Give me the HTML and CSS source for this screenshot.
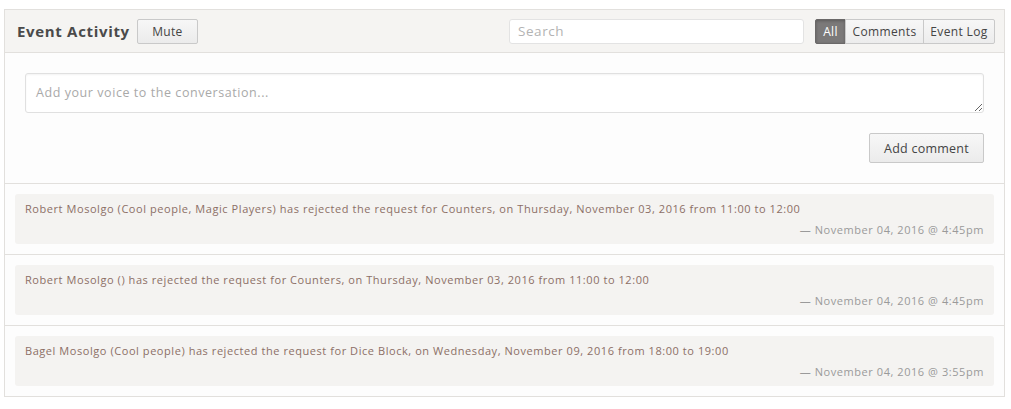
FILE: index.html
```html
<!DOCTYPE html>
<html>
<head>
<meta charset="utf-8">
<link rel="stylesheet" href="styles.css">
</head>
<body>
<div class="panel">
  <div class="panel-header">
    <div class="title-group">
      <h2 class="title">Event Activity</h2>
      <button class="btn btn-mute">Mute</button>
    </div>
    <div class="controls">
      <input class="search" type="text" placeholder="Search">
      <div class="btn-group">
        <button class="seg seg-all active">All</button>
        <button class="seg seg-comments">Comments</button>
        <button class="seg seg-log">Event Log</button>
      </div>
    </div>
  </div>
  <div class="composer">
    <textarea class="comment-box" placeholder="Add your voice to the conversation..."></textarea>
    <div class="composer-actions">
      <button class="btn btn-add">Add comment</button>
    </div>
  </div>
  <ul class="events">
    <li class="event">
      <div class="event-card">
        <p class="event-text">Robert Mosolgo (Cool people, Magic Players) has rejected the request for Counters, on Thursday, November 03, 2016 from 11:00 to 12:00</p>
        <p class="event-date">— November 04, 2016 @ 4:45pm</p>
      </div>
    </li>
    <li class="event">
      <div class="event-card">
        <p class="event-text">Robert Mosolgo () has rejected the request for Counters, on Thursday, November 03, 2016 from 11:00 to 12:00</p>
        <p class="event-date">— November 04, 2016 @ 4:45pm</p>
      </div>
    </li>
    <li class="event">
      <div class="event-card">
        <p class="event-text">Bagel Mosolgo (Cool people) has rejected the request for Dice Block, on Wednesday, November 09, 2016 from 18:00 to 19:00</p>
        <p class="event-date">— November 04, 2016 @ 3:55pm</p>
      </div>
    </li>
  </ul>
</div>
</body>
</html>
```

FILE: styles.css
```css
* { box-sizing: border-box; }
html, body { margin: 0; padding: 0; background: #ffffff; }
body {
  font-family: "Open Sans", "DejaVu Sans", sans-serif;
  letter-spacing: 0.035em;
  color: #555;
  padding: 9px 6px 0 4px;
}
.panel {
  border: 1px solid #e2e0dd;
  border-bottom: none;
  background: #fdfdfd;
}
.panel-header {
  display: flex;
  justify-content: space-between;
  align-items: center;
  height: 43px;
  padding: 0 9px 0 12px;
  background: #f5f4f2;
  border-bottom: 1px solid #e2e0dd;
}
.title-group { display: flex; align-items: center; gap: 7px; }
.title {
  margin: 0 0 1px;
  font-size: 15px;
  font-weight: 700;
  letter-spacing: 0.045em;
  color: #4a4a4a;
}
.btn {
  font-family: inherit;
  letter-spacing: 0.02em;
  font-size: 12px;
  color: #444;
  background: linear-gradient(#f7f7f7, #ebebeb);
  border: 1px solid #c9c9c9;
  border-radius: 2px;
  cursor: pointer;
}
.btn-mute { width: 61px; height: 25px; padding: 0; }
.controls { display: flex; align-items: center; gap: 11px; }
.search {
  width: 295px;
  height: 25px;
  border: 1px solid #e3e3e3;
  border-radius: 3px;
  background: #fff;
  padding: 0 8px;
  font-family: inherit;
  letter-spacing: inherit;
  font-size: 13.5px;
  color: #444;
}
.search::placeholder { color: #b3b3b3; }
.btn-group { display: flex; }
.seg {
  font-family: inherit;
  letter-spacing: 0.03em;
  font-size: 12px;
  color: #444;
  height: 25px;
  padding: 0;
  background: linear-gradient(#f7f7f7, #ececec);
  border: 1px solid #c9c9c9;
  margin-left: -1px;
  cursor: pointer;
}
.seg-all { width: 31px; }
.seg-comments { width: 79px; }
.seg-log { width: 72px; }
.seg:first-child { margin-left: 0; border-radius: 2px 0 0 2px; }
.seg:last-child { border-radius: 0 2px 2px 0; }
.seg.active {
  background: #7b7979;
  border-color: #6a6868;
  color: #fff;
  box-shadow: inset 0 1px 3px rgba(0,0,0,0.25);
}
.composer {
  padding: 20px;
  border-bottom: 1px solid #e2e0dd;
}
.comment-box {
  display: block;
  width: 100%;
  height: 40px;
  border: 1px solid #e0e0e0;
  border-radius: 3px;
  box-shadow: inset 0 1px 2px rgba(0,0,0,0.05);
  background: #fff;
  padding: 10px 10px;
  font-family: inherit;
  letter-spacing: inherit;
  font-size: 12.5px;
  color: #444;
  resize: vertical;
}
.comment-box::placeholder { color: #a9a9a9; }
.composer-actions {
  display: flex;
  justify-content: flex-end;
  margin-top: 20px;
}
.btn-add { width: 115px; height: 30px; font-size: 12.5px; }
.events { list-style: none; margin: 0; padding: 0; }
.event {
  padding: 10px;
  border-bottom: 1px solid #e2e0dd;
}
.event-card {
  background: #f4f3f1;
  border-radius: 3px;
  padding: 7px 10px 6px 10px;
  height: 50px;
}
.event-text {
  margin: 0;
  font-size: 11px;
  color: #8c6f66;
  line-height: 15px;
}
.event-date {
  margin: 6px 0 0;
  font-size: 11px;
  color: #9a9a9a;
  text-align: right;
  line-height: 15px;
}
```
